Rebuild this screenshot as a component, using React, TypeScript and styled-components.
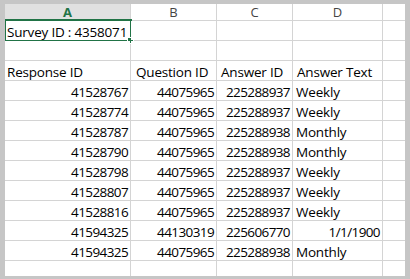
import React from 'react'
import styled, { createGlobalStyle } from 'styled-components'

const GlobalStyle = createGlobalStyle`
  html, body {
    margin: 0;
    padding: 0;
    background: #c6c6c6;
  }
`

const Frame = styled.div`
  width: 410px;
  height: 279px;
  padding: 4px 5px 0 5px;
  box-sizing: border-box;
  background: #c6c6c6;
  overflow: hidden;
`

const Sheet = styled.div`
  height: 272px;
  overflow: hidden;
  display: grid;
  grid-template-columns: 125px 85px 75px 89px 1fr;
  grid-template-rows: 16px;
  grid-auto-rows: 19px;
  gap: 1px;
  background: #d4d4d4;
  font-family: 'Open Sans', 'Noto Sans', sans-serif;
  font-size: 13.5px;
  color: #000;
`

const HeaderCell = styled.div<{ $selected?: boolean }>`
  background: ${({ $selected }) => ($selected ? '#e1e1e1' : '#ffffff')};
  color: ${({ $selected }) => ($selected ? '#217346' : '#444444')};
  font-weight: ${({ $selected }) => ($selected ? 700 : 400)};
  display: flex;
  align-items: center;
  justify-content: center;
  line-height: 1;
  font-size: 13px;
  padding-top: 1px;
  box-sizing: border-box;
`

const Cell = styled.div<{ $align?: 'left' | 'right'; $indent?: number; $num?: boolean }>`
  background: #fff;
  display: flex;
  align-items: flex-end;
  justify-content: ${({ $align }) => ($align === 'right' ? 'flex-end' : 'flex-start')};
  padding: 0 2px 0 ${({ $indent }) => $indent ?? 2}px;
  line-height: 15px;
  letter-spacing: ${({ $num }) => ($num ? '-0.6px' : '-0.2px')};
  white-space: nowrap;
  position: relative;
`

const Selection = styled.div`
  position: absolute;
  top: -2px;
  left: -1px;
  right: -2px;
  bottom: -2px;
  border: 2px solid #217346;
  pointer-events: none;
`

const FillHandle = styled.div`
  position: absolute;
  right: -4px;
  bottom: -4px;
  width: 5px;
  height: 5px;
  background: #217346;
  border: 1px solid #fff;
`

type Row = [string, string, string, string, boolean?]

const rows: Row[] = [
  ['41528767', '44075965', '225288937', 'Weekly'],
  ['41528774', '44075965', '225288937', 'Weekly'],
  ['41528787', '44075965', '225288938', 'Monthly'],
  ['41528790', '44075965', '225288938', 'Monthly'],
  ['41528798', '44075965', '225288937', 'Weekly'],
  ['41528807', '44075965', '225288937', 'Weekly'],
  ['41528816', '44075965', '225288937', 'Weekly'],
  ['41594325', '44130319', '225606770', '1/1/1900', true],
  ['41594325', '44075965', '225288938', 'Monthly'],
]

export default function App() {
  return (
    <>
      <GlobalStyle />
      <Frame>
        <Sheet>
          <HeaderCell $selected>A</HeaderCell>
          <HeaderCell>B</HeaderCell>
          <HeaderCell>C</HeaderCell>
          <HeaderCell>D</HeaderCell>
          <HeaderCell />

          <Cell>
            Survey ID : 4358071
            <Selection>
              <FillHandle />
            </Selection>
          </Cell>
          <Cell />
          <Cell />
          <Cell />
          <Cell />

          <Cell />
          <Cell />
          <Cell />
          <Cell />
          <Cell />

          <Cell>Response ID</Cell>
          <Cell $indent={5}>Question ID</Cell>
          <Cell $indent={4}>Answer ID</Cell>
          <Cell $indent={4}>Answer Text</Cell>
          <Cell />

          {rows.map(([a, b, c, d, dateRight], i) => (
            <React.Fragment key={i}>
              <Cell $align="right" $num>{a}</Cell>
              <Cell $align="right" $num>{b}</Cell>
              <Cell $align="right" $num>{c}</Cell>
              {dateRight ? (
                <Cell $align="right" $num>{d}</Cell>
              ) : (
                <Cell $indent={3}>{d}</Cell>
              )}
              <Cell />
            </React.Fragment>
          ))}

          <Cell />
          <Cell />
          <Cell />
          <Cell />
          <Cell />
        </Sheet>
      </Frame>
    </>
  )
}
